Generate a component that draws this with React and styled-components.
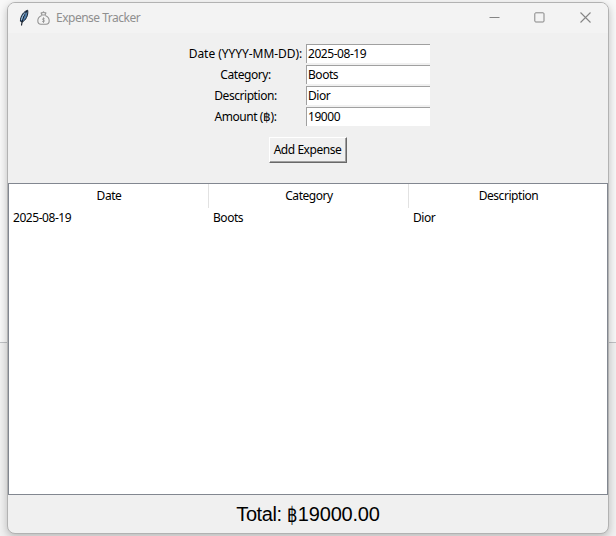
import React from "react";
import styled, { createGlobalStyle } from "styled-components";

const GlobalStyle = createGlobalStyle`
  * { box-sizing: border-box; }
  body { margin: 0; background: #f3f3f3; overflow: hidden; }
`;

const Desktop = styled.div`
  width: 616px;
  height: 536px;
  padding: 2px 7px;
  background: linear-gradient(#f8f8f8 0 342px, #bfc1c4 342px 343px, #f1f1f1 343px);
  font-family: "Noto Sans", "Open Sans", sans-serif;
  font-size: 12px;
  color: #000;
`;

const Window = styled.main`
  width: 602px;
  height: 532px;
  display: flex;
  flex-direction: column;
  border: 1px solid #b2b2b2;
  border-radius: 8px;
  background: #f0f0f0;
  box-shadow: 0 3px 9px rgba(0, 0, 0, 0.24);
`;

const TitleBar = styled.header`
  height: 30px;
  flex: none;
  display: flex;
  align-items: center;
  padding-left: 10px;
  border-radius: 7px 7px 0 0;
  background: #f3f3f3;
  color: #8f8f8f;
`;

const Label = styled.span`
  display: inline-block;
  white-space: pre;
  line-height: 16px;
  letter-spacing: ${(p) => p.$track ?? -0.45}px;
`;

const Title = styled(Label)`
  flex: 1;
  margin-left: 6px;
`;

const Controls = styled.div`
  display: flex;
  align-self: flex-start;
`;

const Control = styled.button`
  width: 45.5px;
  height: 28px;
  padding: 0;
  border: 0;
  background: none;
  display: grid;
  place-items: center;
  color: #858585;
`;

const Form = styled.div`
  height: 150px;
  flex: none;
  display: flex;
  flex-direction: column;
  align-items: center;
  padding-top: 11px;
`;

const Fields = styled.div`
  display: grid;
  grid-template-columns: 118px 124px;
  grid-auto-rows: 21px;
  align-items: start;
  margin-left: 2px;
`;

const FieldName = styled.label`
  text-align: center;
  height: 20px;
  padding-top: 1px;
  padding-right: 3px;
`;

const Entry = styled.div`
  height: 19px;
  border-top: 1px solid #a0a0a0;
  border-left: 1px solid #a0a0a0;
  padding-left: 1px;
  background: #fff;
`;

const AddButton = styled.button`
  width: 78px;
  height: 26px;
  margin-top: 9px;
  padding: 0 1px 2px 0;
  border: 1px solid;
  border-color: #fff #696969 #696969 #fff;
  box-shadow: inset -1px -1px #a0a0a0;
  background: #f0f0f0;
  font: inherit;
  color: #000;
`;

const Table = styled.section`
  height: 312px;
  flex: none;
  border: 1px solid #828790;
  background: #fff;
`;

const Row = styled.div`
  display: grid;
  grid-template-columns: 200px 200px 198px;
`;

const HeadCell = styled.div`
  height: 24px;
  padding: 3px 0 0 1px;
  text-align: center;
  border-right: ${(p) => (p.$last ? "0" : "1px solid #e2e2e2")};
`;

const Cell = styled.div`
  height: 20px;
  padding: 1px 0 0 4px;
`;

const Footer = styled.footer`
  flex: 1;
  display: flex;
  justify-content: center;
  align-items: center;
  font-family: "Liberation Sans", Arial, sans-serif;
  font-size: 20px;
  line-height: 24px;
  white-space: pre;
`;

const TotalText = styled.span`
  letter-spacing: ${(p) => p.$track}px;
`;

const Baht = styled.span`
  display: inline-block;
  width: 11px;
  font-family: "Noto Sans", sans-serif;
  font-size: 21px;
  font-weight: 300;
  transform: scaleX(0.78);
  transform-origin: left;
`;

const Feather = () => (
  <svg width="12" height="18" viewBox="0 0 12 18">
    <path d="M9.7 1.2C6 2.2 2.3 6.8 2.4 12.2L4.2 13C7.6 11.4 10.5 6.5 9.7 1.2Z" fill="#517eaa" stroke="#14202f" strokeWidth="1" />
    <path d="M9 2C5.8 5.5 4.3 9.5 3.5 16.5" fill="none" stroke="#0c1420" strokeWidth="1.1" />
    <path d="M7.6 3.8C5.2 6 4 8.3 3.6 11" fill="none" stroke="#b7d4ec" strokeWidth="0.9" />
  </svg>
);

const BagIcon = styled.svg`
  margin-left: 7px;
`;

const MoneyBag = () => (
  <BagIcon width="13" height="14" viewBox="0 0 13 14" fill="none" stroke="#949494" strokeWidth="1.1" strokeLinejoin="round" strokeLinecap="round">
    <path d="M4.8 3.4L4.1 1.9L5.6 1.8L6.5 .8L7.4 1.8L8.9 1.9L8.2 3.4M4.6 4H8.4" />
    <path d="M4.3 4.8C2 5.8.8 7.8.8 9.8C.8 12.2 2 13.2 4 13.2H9C11 13.2 12.2 12.2 12.2 9.8C12.2 7.8 11 5.8 8.7 4.8" />
    <path d="M7.4 7.7C6.3 7.2 5.5 7.5 5.5 8.2C5.6 9.1 7.4 9 7.5 9.9C7.5 10.8 6.4 10.9 5.5 10.5M6.5 6.7V11.5" strokeWidth=".9" />
  </BagIcon>
);

const fields = [
  { name: "Date (YYYY-MM-DD):", value: "2025-08-19", track: -0.04 },
  { name: "Category:", value: "Boots" },
  { name: "Description:", value: "Dior" },
  { name: "Amount (฿):", value: "19000" },
];

export default function App() {
  return (
    <>
      <GlobalStyle />
      <Desktop>
        <Window>
          <TitleBar>
            <Feather />
            <MoneyBag />
            <Title $track={-0.5}>Expense Tracker</Title>
            <Controls>
              <Control aria-label="Minimize">
                <svg width="11" height="11" viewBox="0 0 11 11"><path d="M.5 5.5H10.5" stroke="currentColor" /></svg>
              </Control>
              <Control aria-label="Maximize">
                <svg width="11" height="11" viewBox="0 0 11 11"><rect x=".8" y=".8" width="9.2" height="9.2" rx="1" fill="none" stroke="currentColor" /></svg>
              </Control>
              <Control aria-label="Close">
                <svg width="11" height="11" viewBox="0 0 11 11"><path d="M.5 .5L10.5 10.5M10.5 .5L.5 10.5" stroke="currentColor" strokeWidth="1.1" /></svg>
              </Control>
            </Controls>
          </TitleBar>
          <Form>
            <Fields>
              {fields.map((f) => (
                <React.Fragment key={f.name}>
                  <FieldName><Label $track={f.track}>{f.name}</Label></FieldName>
                  <Entry><Label>{f.value}</Label></Entry>
                </React.Fragment>
              ))}
            </Fields>
            <AddButton><Label>Add Expense</Label></AddButton>
          </Form>
          <Table>
            <Row>
              <HeadCell><Label>Date</Label></HeadCell>
              <HeadCell><Label>Category</Label></HeadCell>
              <HeadCell $last><Label>Description</Label></HeadCell>
            </Row>
            <Row>
              <Cell><Label>2025-08-19</Label></Cell>
              <Cell><Label>Boots</Label></Cell>
              <Cell><Label>Dior</Label></Cell>
            </Row>
          </Table>
          <Footer>
            <TotalText $track={-0.4}>Total: </TotalText>
            <Baht>฿</Baht>
            <TotalText $track={-0.2}>19000.00</TotalText>
          </Footer>
        </Window>
      </Desktop>
    </>
  );
}
